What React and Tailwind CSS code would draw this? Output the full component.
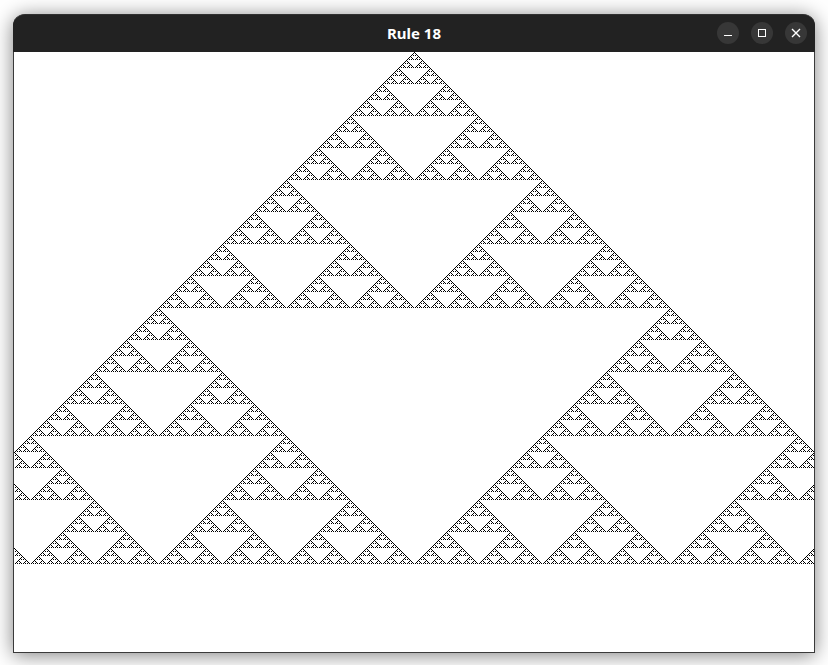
import React, { useMemo } from "react";

function buildPath(width, rows, center) {
  const pad = rows + 2;
  const total = width + pad * 2;
  let row = new Uint8Array(total);
  row[center + pad] = 1;
  let d = "";
  for (let y = 0; y < rows; y++) {
    const next = new Uint8Array(total);
    for (let i = 0; i < total; i++) {
      const x = i - pad;
      if (row[i] && x >= 0 && x < width) d += `M${x} ${y}h1v1h-1z`;
      const l = i > 0 ? row[i - 1] : 0;
      const c = row[i];
      const r = i < total - 1 ? row[i + 1] : 0;
      next[i] = !c && (l ^ r) ? 1 : 0;
    }
    row = next;
  }
  return d;
}

function Automaton() {
  const d = useMemo(() => buildPath(800, 512, 400), []);
  return (
    <svg width="800" height="512" viewBox="0 0 800 512" shapeRendering="crispEdges" className="block">
      <path d={d} fill="#000" />
    </svg>
  );
}

function WinButton({ children }) {
  return (
    <div className="w-[22px] h-[22px] rounded-full bg-[#373737] flex items-center justify-center">
      <svg width="12" height="12" viewBox="0 0 12 12" fill="none" stroke="#fff" strokeWidth="1">
        {children}
      </svg>
    </div>
  );
}

export default function App() {
  return (
    <div className="w-[828px] h-[665px] bg-white pt-[14px] pl-[13px] overflow-hidden">
      <div className="w-[802px] h-[639px] flex flex-col bg-white rounded-t-[12px] border-x border-b border-[#3a3a3a] shadow-[0_2px_20px_rgba(0,0,0,0.5)]">
        <div
          className="h-[38px] -mx-px shrink-0 relative flex items-center justify-center bg-[#222222] rounded-t-[12px] border-t border-[#303030] text-white text-[15px] font-bold"
          style={{ fontFamily: '"Noto Sans", sans-serif' }}
        >
          <span>Rule 18</span>
          <div className="absolute right-[8px] top-[7px] flex gap-[12px]">
            <WinButton>
              <path d="M2 8.5h8" />
            </WinButton>
            <WinButton>
              <rect x="2.5" y="2.5" width="7" height="7" />
            </WinButton>
            <WinButton>
              <path d="M2 2l8 8M10 2l-8 8" strokeWidth="1.4" />
            </WinButton>
          </div>
        </div>
        <Automaton />
      </div>
    </div>
  );
}
